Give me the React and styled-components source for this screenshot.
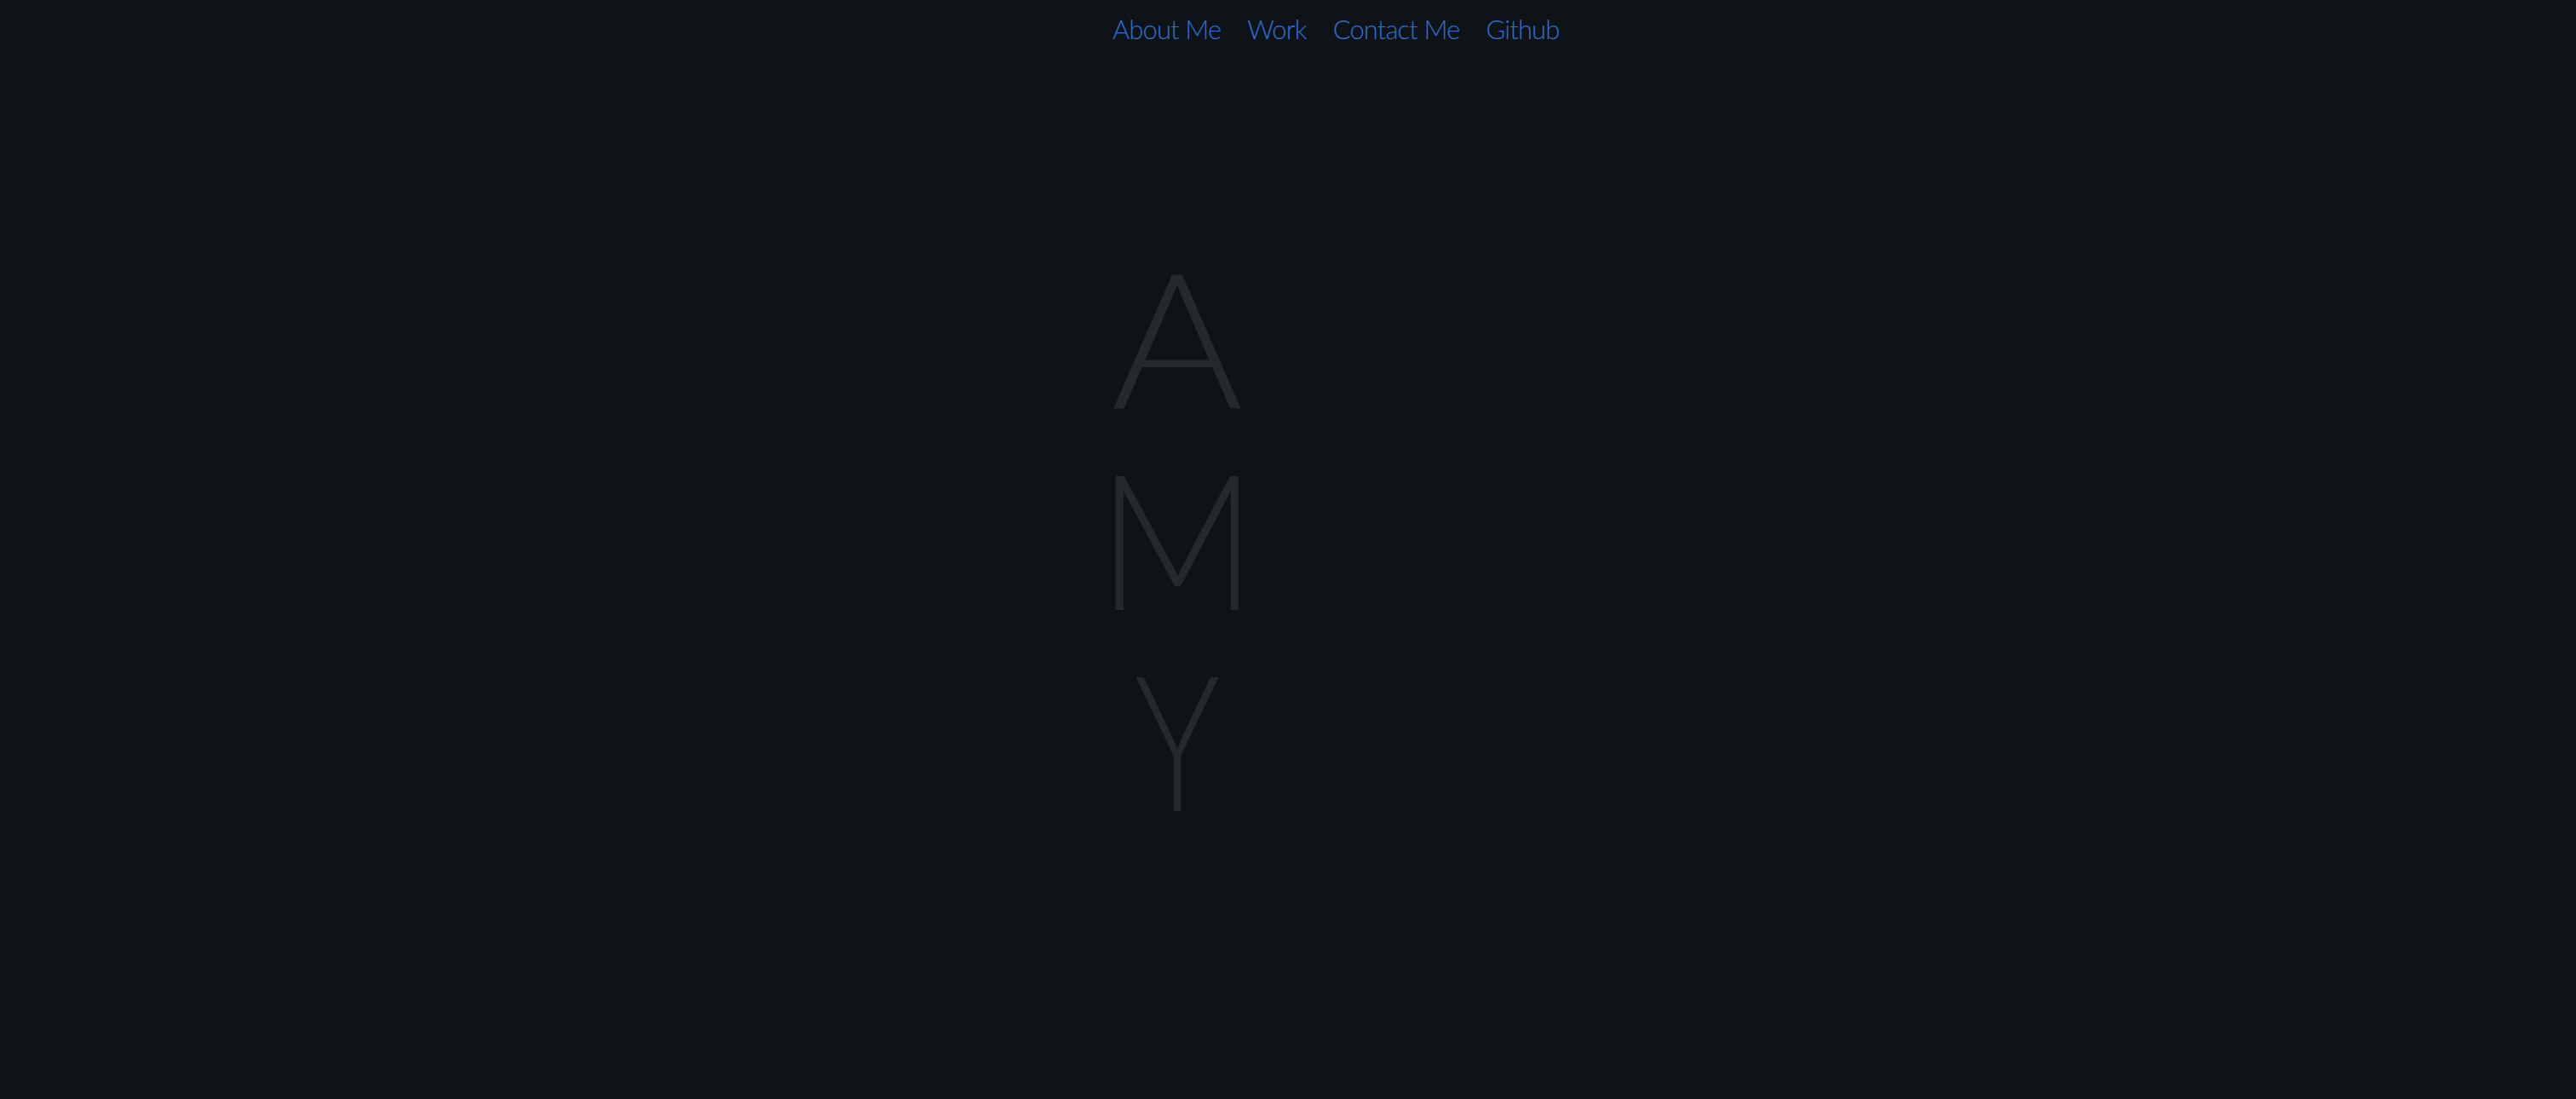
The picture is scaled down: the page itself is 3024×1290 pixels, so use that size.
import React from "react";
import styled, { createGlobalStyle } from "styled-components";

const Global = createGlobalStyle`
  html, body {
    margin: 0;
    padding: 0;
    background: #0e1318;
  }
  body {
    font-family: "Lato", "Open Sans", sans-serif;
  }
`;

const Page = styled.div`
  min-height: 1290px;
  background: #0e1318;
  display: flex;
  flex-direction: column;
  align-items: flex-start;
  padding-left: 1306px;
  box-sizing: border-box;
`;

const Nav = styled.nav`
  display: flex;
  align-items: baseline;
  gap: 31px;
  padding-top: 14px;
`;

const NavLink = styled.a`
  font-family: "Lato", sans-serif;
  font-weight: 300;
  font-size: 31px;
  line-height: 40px;
  color: #2f6fd2;
  text-decoration: none;
  letter-spacing: -0.9px;
  cursor: pointer;
`;

const Name = styled.h1`
  margin: 222px 0 0 0;
  display: flex;
  flex-direction: column;
  align-items: center;
  width: 152px;
`;

const Letter = styled.span`
  font-family: "Lato", sans-serif;
  font-weight: 300;
  font-size: 222px;
  line-height: 236px;
  color: #25282d;
  transform: scaleX(${(p) => p.$stretch || 1});
`;

export default function App() {
  return (
    <>
      <Global />
      <Page>
        <Nav>
          <NavLink>About Me</NavLink>
          <NavLink>Work</NavLink>
          <NavLink>Contact Me</NavLink>
          <NavLink>Github</NavLink>
        </Nav>
        <Name>
          <Letter $stretch={1.07}>A</Letter>
          <Letter $stretch={0.93}>M</Letter>
          <Letter $stretch={0.76}>Y</Letter>
        </Name>
      </Page>
    </>
  );
}
